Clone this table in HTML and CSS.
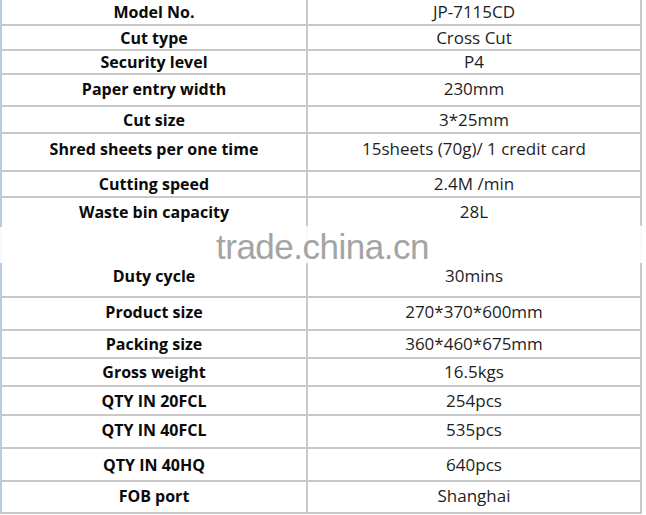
FILE: index.html
```html
<!DOCTYPE html>
<html>
<head>
<meta charset="utf-8">
<link rel="stylesheet" href="styles.css">
</head>
<body>
<div class="sheet">
  <div class="grid">
    <div class="k">Model No.</div><div class="v">JP-7115CD</div>
    <div class="k">Cut type</div><div class="v">Cross Cut</div>
    <div class="k">Security level</div><div class="v">P4</div>
    <div class="k up2">Paper entry width</div><div class="v up2">230mm</div>
    <div class="k">Cut size</div><div class="v">3*25mm</div>
    <div class="k up4">Shred sheets per one time</div><div class="v up4">15sheets (70g)/ 1 credit card</div>
    <div class="k">Cutting speed</div><div class="v">2.4M /min</div>
    <div class="k open">Waste bin capacity</div><div class="v open">28L</div>
    <div class="k open"></div><div class="v open"></div>
    <div class="k">Duty cycle</div><div class="v">30mins</div>
    <div class="k up2">Product size</div><div class="v up2">270*370*600mm</div>
    <div class="k">Packing size</div><div class="v">360*460*675mm</div>
    <div class="k">Gross weight</div><div class="v">16.5kgs</div>
    <div class="k">QTY IN 20FCL</div><div class="v">254pcs</div>
    <div class="k up2">QTY IN 40FCL</div><div class="v up2">535pcs</div>
    <div class="k">QTY IN 40HQ</div><div class="v">640pcs</div>
    <div class="k up2">FOB port</div><div class="v up2">Shanghai</div>
  </div>
  <div class="watermark">trade.china.cn</div>
</div>
</body>
</html>
```

FILE: styles.css
```css
html, body {
  margin: 0;
  padding: 0;
  background: #ffffff;
}

.sheet {
  position: relative;
  width: 646px;
  height: 515px;
  overflow: hidden;
  background: #ffffff;
}

.grid {
  display: grid;
  width: 640px;
  grid-template-columns: 306px 334px;
  grid-template-rows: 26px 25px 24px 32px 27px 38px 26px 29px 29px 42px 33px 28px 28px 29px 33px 33px 32px;
  border-left: 2px solid #b9cae4;
}

.k, .v {
  box-sizing: border-box;
  display: flex;
  align-items: center;
  justify-content: center;
  border-right: 2px solid #c8c8c8;
  border-bottom: 2px solid #c8c8c8;
  font-family: "Open Sans", Lato, sans-serif;
  font-size: 16px;
  line-height: 20px;
  white-space: nowrap;
}

.k {
  font-weight: 700;
  color: #0a0a0a;
}

.v {
  font-weight: 400;
  font-size: 17px;
  color: #1e1e1e;
}

.open {
  border-bottom-color: transparent;
}

.up2 {
  padding-bottom: 3px;
}

.up4 {
  padding-bottom: 7px;
}

.watermark {
  position: absolute;
  left: 0;
  top: 227px;
  width: 646px;
  height: 36px;
  background: rgba(255, 255, 255, 0.88);
  box-sizing: border-box;
  padding-left: 216px;
  font-family: "Liberation Sans", Arial, sans-serif;
  font-size: 35px;
  letter-spacing: -0.5px;
  line-height: 40px;
  color: #a4a4a4;
}
```
